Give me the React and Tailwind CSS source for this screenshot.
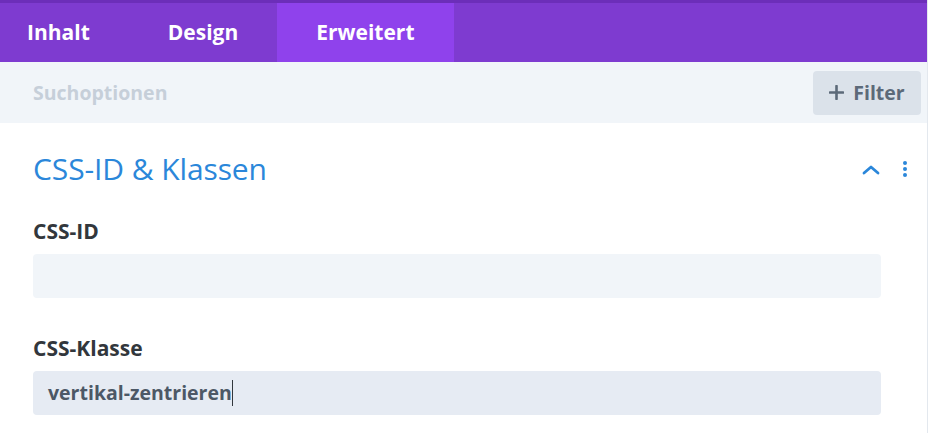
import React from 'react';

const tabs = [
  { id: 'inhalt', label: 'Inhalt', cls: 'pl-[27px] pr-[39px]' },
  { id: 'design', label: 'Design', cls: 'px-[39px]' },
  { id: 'erweitert', label: 'Erweitert', cls: 'px-[39px]', active: true },
];

export default function App() {
  return (
    <div className="w-[928px] h-[433px] overflow-hidden bg-white font-['Open_Sans',sans-serif]">
      <div className="border-r border-[#e3e8ee] h-full">
        {/* tabs */}
        <div className="bg-[#7e3bd0] border-t-[3px] border-[#6c2eb9] flex h-[62px]">
          {tabs.map(t => (
            <div key={t.id}
              className={`flex items-center h-full text-[21px] font-bold text-white ${t.cls} ${t.active ? 'bg-[#8f42ec]' : ''}`}>
              {t.label}
            </div>
          ))}
        </div>

        {/* search bar */}
        <div className="bg-[#f1f5f9] h-[61px] flex items-center justify-between pl-[33px] pr-[6px]">
          <span className="text-[19.5px] font-bold text-[#c6cfd9]">Suchoptionen</span>
          <button className="h-[44px] w-[108px] rounded-[4px] bg-[#dbe2ea] flex items-center justify-center gap-[9px] text-[#5c6a79] text-[19.5px] font-bold">
            <svg width="15" height="15" viewBox="0 0 15 15"><path d="M7.5 1v13M1 7.5h13" stroke="#5c6a79" strokeWidth="2.6" strokeLinecap="round" /></svg>
            Filter
          </button>
        </div>

        {/* toggle */}
        <div className="pl-[33px] pr-[46px] pt-[25px]">
          <div className="flex items-center justify-between h-[40px]">
            <h2 className="text-[30px] text-[#2b87da] font-normal tracking-[-0.1px]">CSS-ID &amp; Klassen</h2>
            <div className="flex items-center gap-[22px] -mr-[27px] mt-[2px]">
              <svg width="18" height="11" viewBox="0 0 18 11"><path d="M2 9l7-6 7 6" fill="none" stroke="#2b87da" strokeWidth="2.8" strokeLinecap="round" strokeLinejoin="round" /></svg>
              <svg width="6" height="18" viewBox="0 0 6 18">
                <circle cx="3" cy="3" r="2" fill="#2b87da" />
                <circle cx="3" cy="9" r="2" fill="#2b87da" />
                <circle cx="3" cy="15" r="2" fill="#2b87da" />
              </svg>
            </div>
          </div>

          <div className="mt-[30px]">
            <label className="block text-[21px] font-bold text-[#32373c] leading-[26px]">CSS-ID</label>
            <div className="mt-[10px] h-[44px] w-[848px] rounded-[4px] bg-[#f1f5f9]" />
          </div>

          <div className="mt-[37px]">
            <label className="block text-[21px] font-bold text-[#32373c] leading-[26px]">CSS-Klasse</label>
            <div className="mt-[10px] h-[44px] w-[848px] rounded-[4px] bg-[#e6ebf3] flex items-center px-[15px]">
              <span className="text-[19.5px] font-bold text-[#4c5866]">vertikal-zentrieren</span>
              <span className="w-px h-[26px] bg-[#32373c]" />
            </div>
          </div>
        </div>
      </div>
    </div>
  );
}
